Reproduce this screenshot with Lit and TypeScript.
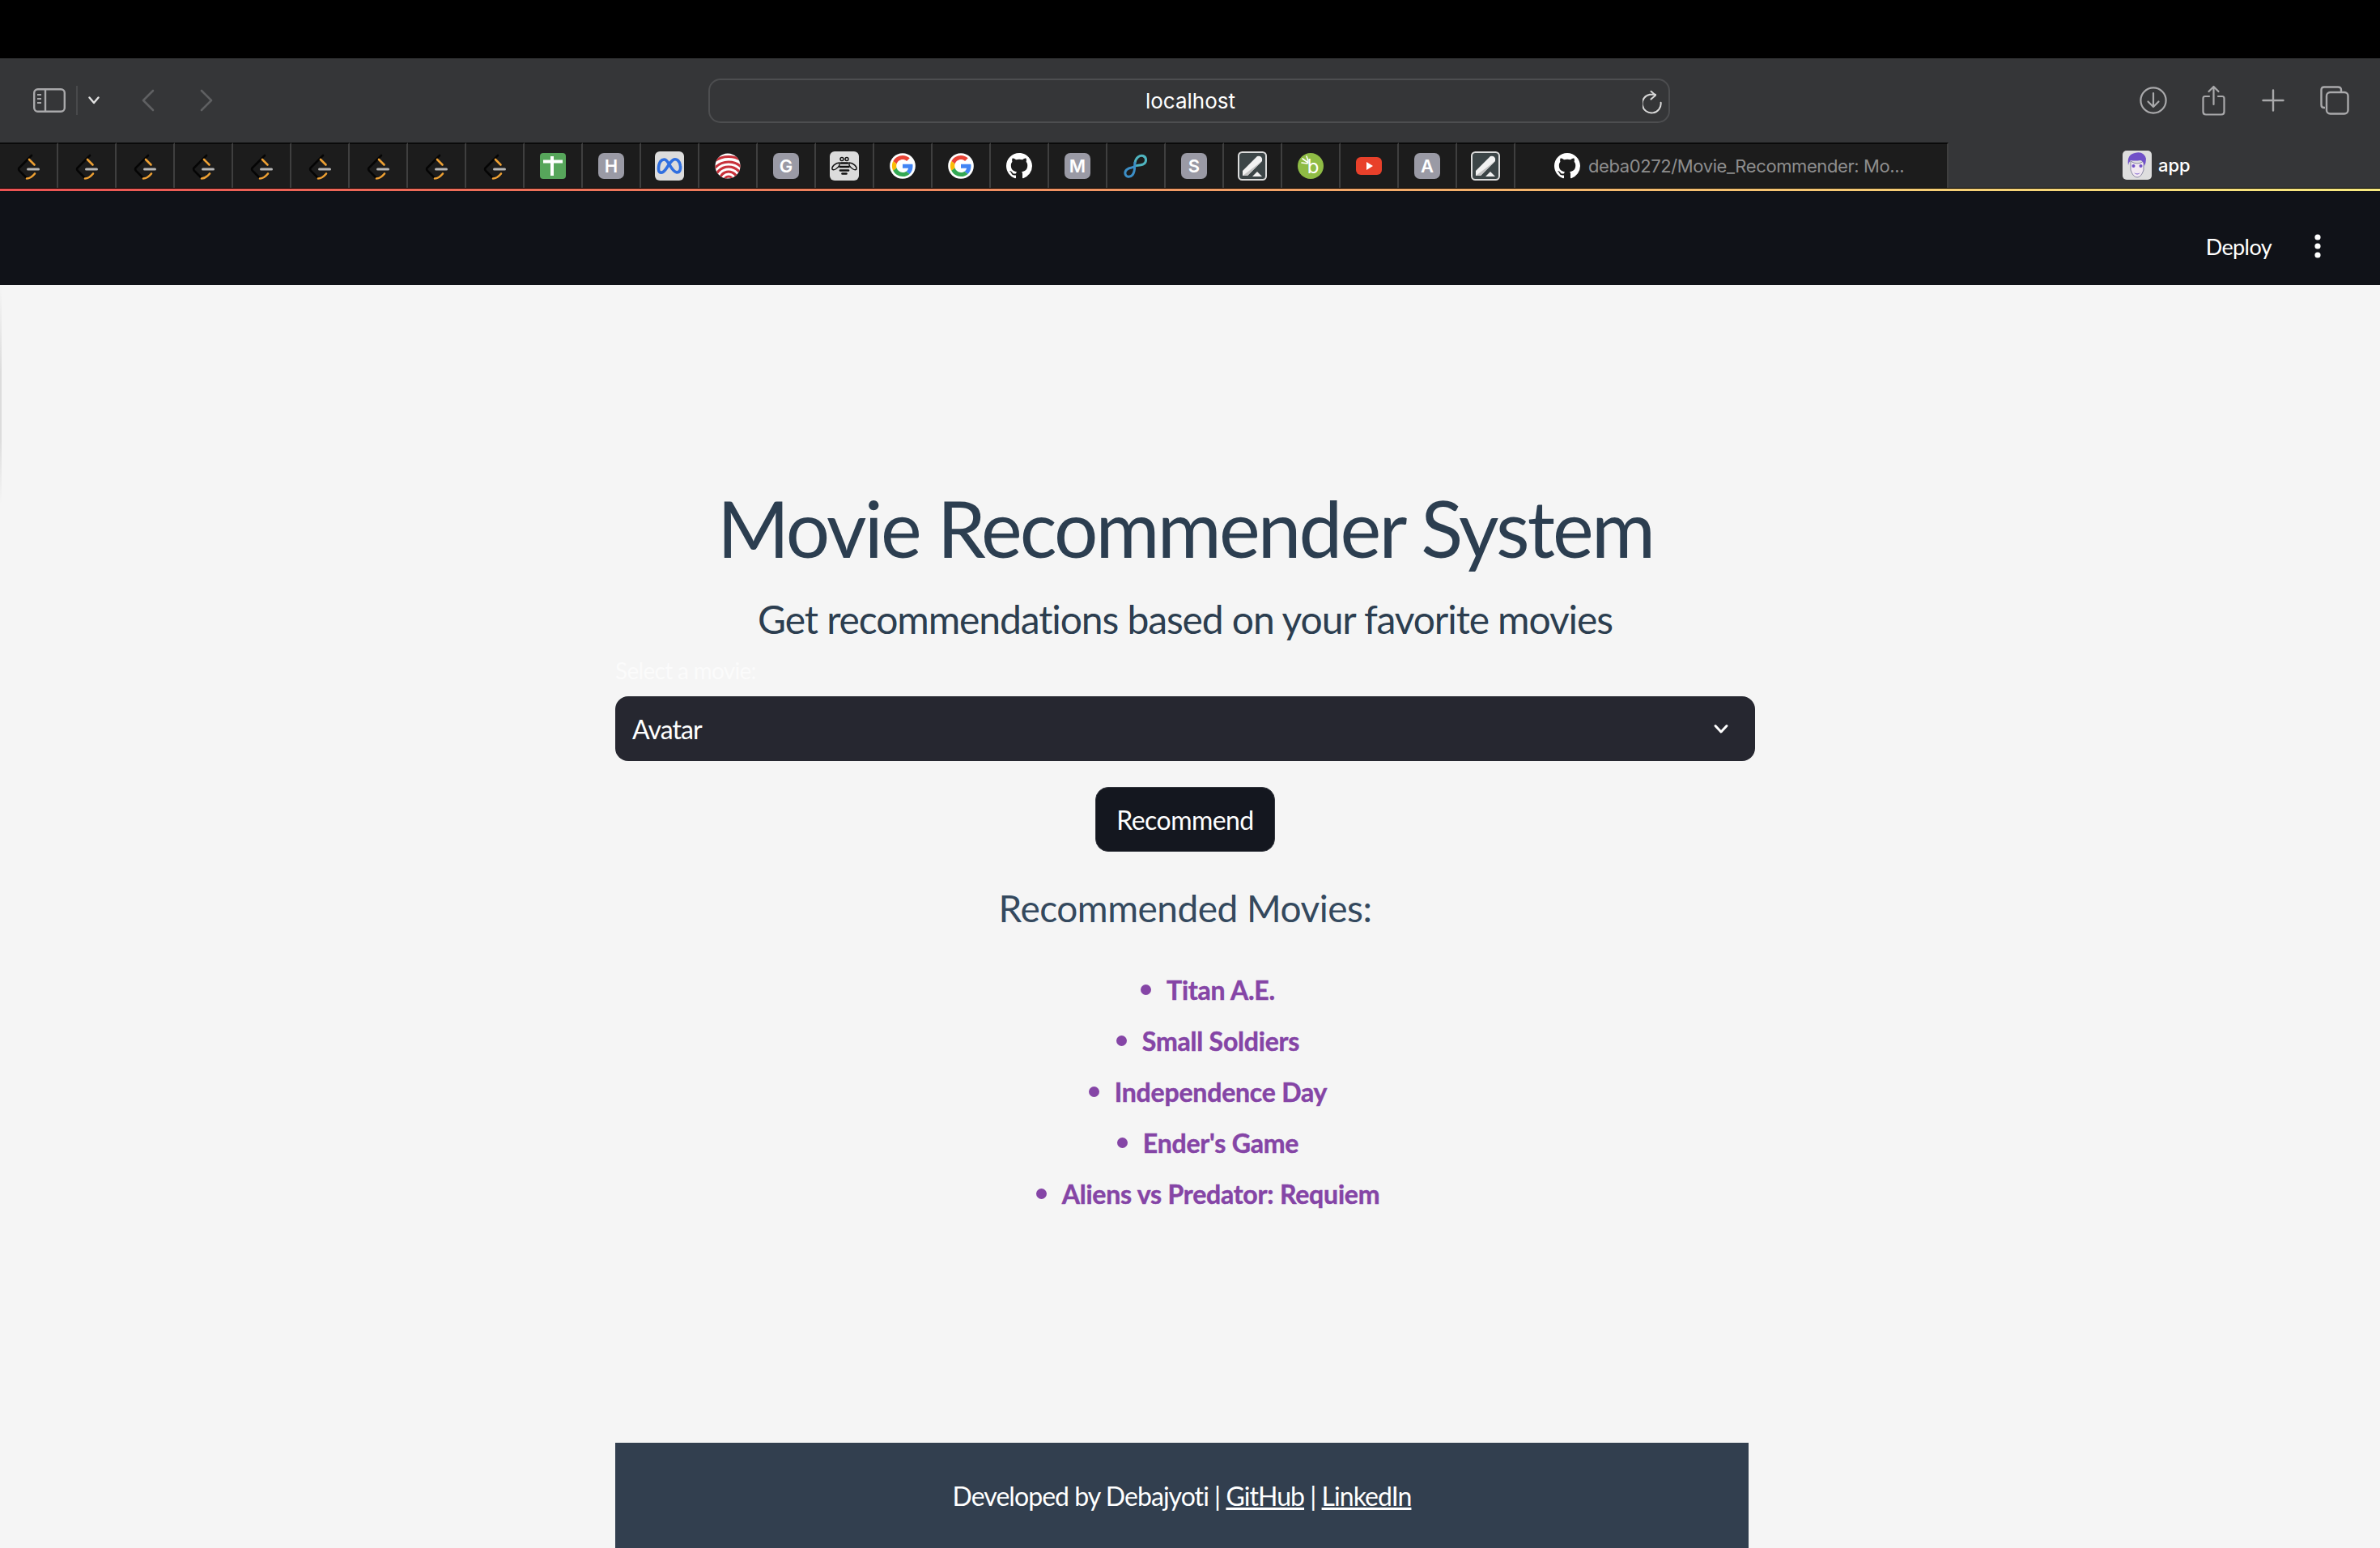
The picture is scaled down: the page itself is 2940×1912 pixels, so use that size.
import { LitElement, html, css, svg } from "lit";
import { customElement } from "lit/decorators.js";

const OCTO = "M8 0C3.58 0 0 3.58 0 8c0 3.54 2.29 6.53 5.47 7.59.4.07.55-.17.55-.38 0-.19-.01-.82-.01-1.49-2.01.37-2.53-.49-2.69-.94-.09-.23-.48-.94-.82-1.13-.28-.15-.68-.52-.01-.53.63-.01 1.08.58 1.23.82.72 1.21 1.87.87 2.33.66.07-.52.28-.87.51-1.07-1.78-.2-3.64-.89-3.64-3.95 0-.87.31-1.59.82-2.15-.08-.2-.36-1.02.08-2.12 0 0 .67-.21 2.2.82.64-.18 1.32-.27 2-.27.68 0 1.36.09 2 .27 1.53-1.04 2.2-.82 2.2-.82.44 1.1.16 1.92.08 2.12.51.56.82 1.27.82 2.15 0 3.07-1.87 3.75-3.65 3.95.29.25.54.73.54 1.48 0 1.07-.01 1.93-.01 2.2 0 .21.15.46.55.38A8.013 8.013 0 0016 8c0-4.42-3.58-8-8-8z";

const box = (inner: unknown) => html`<svg class="ico" viewBox="0 0 36 36" width="36" height="36">${inner}</svg>`;

const leet = () => html`<svg class="ico" viewBox="-1 0 36 36" width="36" height="36">
  <path d="M21 5 L5.5 20.5 Q4.5 22 6 24 L15 33" fill="none" stroke="#050505" stroke-width="2.6" stroke-linecap="round"/>
  <path d="M18 10 L24.5 16.5" fill="none" stroke="#eda033" stroke-width="2.6" stroke-linecap="round"/>
  <path d="M15 33.5 Q20 33.5 25 27.5" fill="none" stroke="#eda033" stroke-width="2.6" stroke-linecap="round"/>
  <rect x="15" y="20.6" width="16" height="3" rx="1.5" fill="#b6b6b6"/>
</svg>`;

const green = () => box(svg`
  <rect x="2" y="2" width="32" height="32" rx="4" fill="#57a65b"/>
  <rect x="6" y="10.5" width="24" height="4" fill="#fff"/><rect x="15" y="6" width="4" height="24" fill="#fff"/>`);

const meta = () => box(svg`
  <rect width="36" height="36" rx="6" fill="#dcdcdc"/>
  <path d="M4.5 22 C4.5 13 8.5 9.5 12 10 C17 10.5 20 25 27 26 C31 26 32 22 31.5 18 C31 12 27 9 23.5 10 C18 11.5 14 25 9 26 C6 26.5 4.5 25 4.5 22Z" fill="none" stroke="#2f6fe0" stroke-width="3.6"/>`);

const finger = () => box(svg`
  <defs><clipPath id="fp"><circle cx="18" cy="18" r="15.5"/></clipPath></defs>
  <circle cx="18" cy="18" r="15.5" fill="#fff"/>
  <g clip-path="url(#fp)" fill="none" stroke="#c8313a" stroke-width="3.2">
    <circle cx="19" cy="36" r="5"/><circle cx="19" cy="36" r="11"/><circle cx="19" cy="36" r="17"/><circle cx="19" cy="36" r="23"/><circle cx="19" cy="36" r="29.5"/>
  </g>`);

const bee = () => box(svg`
  <rect width="36" height="36" rx="6" fill="#dcdcdc"/>
  <g fill="none" stroke="#111" stroke-width="1.4">
    <circle cx="15" cy="9.5" r="2"/><circle cx="21" cy="9.5" r="2"/>
    <path d="M12 14 C7 14 2 19 3 22 C5 24 10 21 12 17Z"/><path d="M24 14 C29 14 34 19 33 22 C31 24 26 21 24 17Z"/>
  </g>
  <g stroke="#111" stroke-width="2.6" stroke-linecap="round">
    <path d="M14 14.5H22"/><path d="M12.5 19H23.5"/><path d="M13 23.5H23"/><path d="M15.5 27.5H20.5"/>
  </g>`);

const google = () => html`<svg class="ico" viewBox="-9 -9 66 66" width="36" height="36">
  <circle cx="24" cy="24" r="29" fill="#fff"/>
  <path fill="#EA4335" d="M24 9.5c3.54 0 6.71 1.22 9.21 3.6l6.85-6.85C35.9 2.38 30.47 0 24 0 14.62 0 6.51 5.38 2.56 13.22l7.98 6.19C12.43 13.72 17.74 9.5 24 9.5z"/>
  <path fill="#4285F4" d="M46.98 24.55c0-1.57-.15-3.09-.38-4.55H24v9.02h12.94c-.58 2.96-2.26 5.48-4.78 7.18l7.73 6c4.51-4.18 7.09-10.36 7.09-17.65z"/>
  <path fill="#FBBC05" d="M10.53 28.59c-.48-1.45-.76-2.99-.76-4.59s.27-3.14.76-4.59l-7.98-6.19C.92 16.46 0 20.12 0 24c0 3.88.92 7.54 2.56 10.78l7.97-6.19z"/>
  <path fill="#34A853" d="M24 48c6.48 0 11.93-2.13 15.89-5.81l-7.73-6c-2.15 1.45-4.92 2.3-8.16 2.3-6.26 0-11.57-4.22-13.47-9.91l-7.98 6.19C6.51 42.62 14.62 48 24 48z"/>
</svg>`;

const octo = () => html`<svg class="ico32" viewBox="0 0 16 16" width="32" height="32"><path d="${OCTO}" fill="#fff"/></svg>`;

const infinity = () => box(svg`
  <path d="M17 14 C18 8 23 4 27 5.5 C32 7.5 31.5 14 27 16 C23 17.5 19 17 17 18" fill="none" stroke="#4fb4bf" stroke-width="3" stroke-linecap="round"/>
  <path d="M17 14 C16 18 18 24 14 29 C11 32.5 6 32 5 28 C4 24 8 20.5 13 20 C15 19.8 16 19 17 18" fill="none" stroke="#3c8fc7" stroke-width="3" stroke-linecap="round"/>`);

const pen = () => box(svg`
  <rect x="1" y="1" width="34" height="34" rx="4.5" fill="#3c4547" stroke="#dcdcdc" stroke-width="2"/>
  <path d="M6 24 L24 6 Q27 5 29 7 Q31 9 30 12 L12 30 L6 30Z" fill="#f2f2f2"/>
  <path d="M6 30 L30 12 L12 30Z" fill="#c4c4c4"/>
  <path d="M24 25 L30 31 L18 31Z" fill="#f2f2f2"/>`);

const bamboo = () => box(svg`
  <circle cx="18" cy="18" r="16" fill="#8fbc45"/>
  <text x="21" y="27" text-anchor="middle" class="bamboo">b</text>
  <path d="M8 9 L15 14 M13 6 L15 12 M7 14 L14 15" stroke="#fff" stroke-width="1.6" stroke-linecap="round"/>`);

const youtube = () => box(svg`
  <rect x="2" y="7" width="32" height="22" rx="6" fill="#e8402a"/>
  <path d="M15 13 L23 18 L15 23Z" fill="#fff"/>`);

const avatar = () => box(svg`
  <rect width="36" height="36" rx="5" fill="#dedede"/>
  <path d="M10 13 Q18 19 26 13 L26 24 Q23 33 18 33 Q13 33 10 24Z" fill="#f2e9f2" stroke="#6f6f90" stroke-width=".8"/>
  <path d="M7 18 Q5 5 15 3 Q26 0 29 10 Q29 15 27 19 Q26 13 22 12 Q15 13 10 12 Q8 14 7 18Z" fill="#7050c8"/>
  <circle cx="13.5" cy="19" r="2" fill="#7050c8"/><circle cx="22.5" cy="19" r="2" fill="#7050c8"/>
  <path d="M14 27 Q18 30 22 27 Q18 32 14 27Z" fill="#7050c8"/>`);

@customElement("app-root")
export class AppRoot extends LitElement {
  static styles = css`
    :host { display: flex; flex-direction: column; position: relative; width: 2940px; height: 1912px; overflow: hidden; background: #f5f5f5; font-family: "Lato", "Noto Sans", sans-serif; }
    .edge { position: absolute; left: 0; top: 352px; width: 2px; height: 270px; background: linear-gradient(180deg, transparent, #dcdcdc 40%, #dcdcdc 70%, transparent); }
    .top { height: 72px; background: #000; flex: none; }
    .toolbar { height: 104px; flex: none; background: #353638; display: grid; grid-template-columns: 875px 1188px 1fr; align-items: center; box-sizing: border-box; }
    .left { display: flex; align-items: center; padding-left: 41px; }
    .left svg { display: block; flex: none; }
    .sep { width: 2px; height: 36px; background: #48494b; margin-left: 13px; }
    .chev { margin-left: 13px; }
    .back { margin-left: 52px; }
    .fwd { margin-left: 56px; }
    .address { height: 55px; box-sizing: border-box; border: 2px solid #4d4e50; border-radius: 15px; display: flex; align-items: center; justify-content: center; position: relative; padding-left: 3px; color: #fff; font: 400 26px "Inter", sans-serif; }
    .reload { position: absolute; right: 6px; top: 13px; }
    .right { display: flex; align-items: center; justify-content: flex-end; padding-right: 38px; }
    .right svg { display: block; flex: none; }
    .right .r2 { margin-left: 43px; }
    .right .r3 { margin-left: 45px; }
    .right .r4 { margin-left: 44px; }
    .tabs { height: 57px; flex: none; display: flex; background: #353638; box-sizing: border-box; border-bottom: 1px solid #000; }
    .pin { width: 72px; flex: none; box-sizing: border-box; background: #1c1c1c; border-top: 2px solid #0a0a0a; border-right: 2px solid #3f3f3f; display: flex; align-items: center; justify-content: center; }
    .ico, .ico32 { display: block; flex: none; }
    .tile { width: 32px; height: 32px; border-radius: 7px; background: #9a9aa5; color: #fff; font: 600 22px/32px "Inter", sans-serif; text-align: center; }
    .bamboo { fill: #fff; font: 400 24px "Inter", sans-serif; }
    .gh { width: 535px; flex: none; box-sizing: border-box; background: #1c1c1c; border-top: 2px solid #0a0a0a; border-right: 2px solid #3f3f3f; display: flex; align-items: center; padding-left: 48px; gap: 10px; color: #8e8e8e; font: 400 22px "Inter", sans-serif; letter-spacing: -0.4px; white-space: nowrap; }
    .active { flex: 1; display: flex; align-items: center; padding-left: 215px; gap: 8px; color: #fff; font: 500 22px "Inter", sans-serif; }
    .grad { height: 3px; flex: none; background: linear-gradient(90deg, #ec5353 0%, #ef7f5c 33%, #f4b76d 66%, #f8ea80 100%); }
    .head { height: 116px; flex: none; background: #101218; display: flex; align-items: center; justify-content: flex-end; padding: 20px 72px 0 0; box-sizing: border-box; color: #fff; font-size: 27px; letter-spacing: -0.6px; }
    .kebab { margin-left: 52px; display: block; }
    main { flex: 1; display: flex; flex-direction: column; margin-left: 760px; width: 1408px; min-height: 0; }
    h1 { margin: 240px 0 0; font-weight: 400; font-size: 96px; line-height: 120px; letter-spacing: -2.8px; color: #2c3e50; text-align: center; }
    .sub { margin: 23px 0 0; font-weight: 400; font-size: 48px; line-height: 60px; letter-spacing: -1.1px; color: #2c3e50; text-align: center; }
    label { margin-top: 16px; height: 34px; font-size: 28px; line-height: 34px; letter-spacing: -0.7px; color: #fbfbfb; }
    .select { margin-top: 15px; height: 80px; flex: none; box-sizing: border-box; background: #262730; border-radius: 16px; color: #fff; font-size: 32px; letter-spacing: -0.9px; display: flex; align-items: center; justify-content: space-between; padding: 0 32px 0 21px; }
    .btn { margin: 32px auto 0; width: 222px; height: 80px; flex: none; box-sizing: border-box; background: #14171f; border: 1px solid #33363e; border-radius: 16px; color: #fff; font: 400 32px "Lato", sans-serif; letter-spacing: -0.55px; padding: 0; }
    h2 { margin: 40px 0 0; font-weight: 400; font-size: 46px; line-height: 60px; letter-spacing: -0.5px; color: #34495e; text-align: center; }
    ul { margin: 43px 0 0; padding: 0 0 0 88px; }
    li { width: fit-content; margin: 0 auto 10px; font-size: 32px; line-height: 51px; font-weight: 700; letter-spacing: -0.2px; -webkit-text-stroke: 0.5px #8545a6; color: #8545a6; }
    li::marker { font-size: 38px; }
    footer { margin-top: auto; width: 1400px; height: 130px; flex: none; background: #323f4f; color: #fff; font-size: 32px; letter-spacing: -0.95px; display: flex; align-items: center; justify-content: center; white-space: pre; }
    footer a { color: #fff; }
  `;

  render() {
    const tile = (l: string) => html`<div class="tile">${l}</div>`;
    const pins = [
      ...Array.from({ length: 9 }, () => leet()),
      green(), tile("H"), meta(), finger(), tile("G"), bee(), google(), google(), octo(), tile("M"), infinity(), tile("S"), pen(), bamboo(), youtube(), tile("A"), pen(),
    ];
    const movies = ["Titan A.E.", "Small Soldiers", "Independence Day", "Ender's Game", "Aliens vs Predator: Requiem"];
    return html`
      <div class="top"></div>
      <div class="toolbar">
        <div class="left">
          <svg width="40" height="30" viewBox="0 0 40 30" fill="none" stroke="#a9a9ab" stroke-width="2.4"><rect x="1.2" y="1.2" width="37.6" height="27.6" rx="4.5"/><path d="M15 1.5V28.5"/><path d="M5 8H10M5 13H10M5 18H10" stroke-width="2"/></svg>
          <div class="sep"></div>
          <svg class="chev" width="14" height="10" viewBox="0 0 14 10" fill="none" stroke="#e2e2e2" stroke-width="2.4" stroke-linecap="round" stroke-linejoin="round"><path d="M1.5 1.5L7 8L12.5 1.5"/></svg>
          <svg class="back" width="16" height="28" viewBox="0 0 16 28" fill="none" stroke="#5f6062" stroke-width="2.6" stroke-linecap="round" stroke-linejoin="round"><path d="M14 2L2 14L14 26"/></svg>
          <svg class="fwd" width="16" height="28" viewBox="0 0 16 28" fill="none" stroke="#5f6062" stroke-width="2.6" stroke-linecap="round" stroke-linejoin="round"><path d="M2 2L14 14L2 26"/></svg>
        </div>
        <div class="address">localhost
          <svg class="reload" width="26" height="30" viewBox="0 0 26 30" fill="none" stroke="#d8d8d8" stroke-width="2" stroke-linecap="round" stroke-linejoin="round"><path d="M22.6 14.7A11.5 11.5 0 1 1 9 4.7H16"/><path d="M10.5 .8L16 5.7L10.5 10.6"/></svg>
        </div>
        <div class="right">
          <svg width="34" height="34" viewBox="0 0 34 34" fill="none" stroke="#a9a9ab" stroke-width="2.2" stroke-linecap="round" stroke-linejoin="round"><circle cx="17" cy="17" r="15.6"/><path d="M17 8V25M10.5 18.5L17 25L23.5 18.5"/></svg>
          <svg class="r2" width="29" height="38" viewBox="0 0 29 38" fill="none" stroke="#a9a9ab" stroke-width="2.2" stroke-linecap="round" stroke-linejoin="round"><path d="M9 14H4Q1.5 14 1.5 16.5V33Q1.5 36.5 5 36.5H24Q27.5 36.5 27.5 33V16.5Q27.5 14 25 14H20"/><path d="M14.5 24V2M8.5 8L14.5 2L20.5 8"/></svg>
          <svg class="r3" width="28" height="28" viewBox="0 0 28 28" fill="none" stroke="#a9a9ab" stroke-width="2.4" stroke-linecap="round"><path d="M14 1.5V26.5M1.5 14H26.5"/></svg>
          <svg class="r4" width="36" height="36" viewBox="0 0 36 36" fill="none" stroke="#a9a9ab" stroke-width="2.4"><path d="M6 27H5Q1.5 27 1.5 23.5V5Q1.5 1.5 5 1.5H22Q26 1.5 26 5V7"/><rect x="8" y="8" width="26.5" height="26.5" rx="4.5"/></svg>
        </div>
      </div>
      <div class="tabs">
        ${pins.map((p) => html`<div class="pin">${p}</div>`)}
        <div class="gh">${octo()}<span>deba0272/Movie_Recommender: Mo...</span></div>
        <div class="active">${avatar()}<span>app</span></div>
      </div>
      <div class="grad"></div>
      <div class="head">
        <span>Deploy</span>
        <svg class="kebab" width="10" height="32" viewBox="0 0 10 32" fill="#fff"><circle cx="5" cy="5" r="3.6"/><circle cx="5" cy="16" r="3.6"/><circle cx="5" cy="27" r="3.6"/></svg>
      </div>
      <main>
        <h1>Movie Recommender System</h1>
        <p class="sub">Get recommendations based on your favorite movies</p>
        <label>Select a movie:</label>
        <div class="select"><span>Avatar</span>
          <svg width="20" height="13" viewBox="0 0 20 13" fill="none" stroke="#fff" stroke-width="3" stroke-linecap="round" stroke-linejoin="round"><path d="M3 2.5L10 10L17 2.5"/></svg>
        </div>
        <button class="btn">Recommend</button>
        <h2>Recommended Movies:</h2>
        <ul>${movies.map((m) => html`<li>${m}</li>`)}</ul>
        <footer>Developed by Debajyoti | <a href="#">GitHub</a> | <a href="#">LinkedIn</a></footer>
      </main>
      <div class="edge"></div>
    `;
  }
}
